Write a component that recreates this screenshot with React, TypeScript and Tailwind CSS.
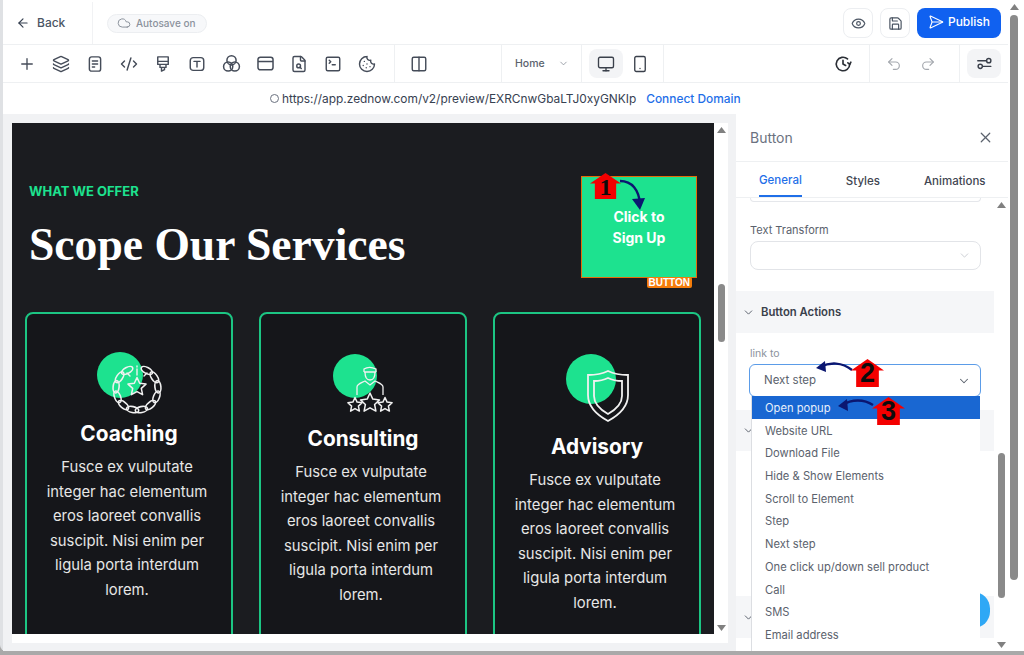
import * as React from "react";
import {
  ArrowLeft,
  ChevronDown,
  Cloud,
  CodeXml,
  Columns2,
  Cookie,
  Eye,
  FileSearch,
  Layers,
  Monitor,
  Plus,
  Redo2,
  Save,
  SendHorizontal,
  Smartphone,
  SquareTerminal,
  Undo2,
  X,
} from "lucide-react";

const bodyLines = ["Fusce ex vulputate", "integer hac elementum", "eros laoreet convallis", "suscipit. Nisi enim per", "ligula porta interdum", "lorem."];

const linkOptions = [
  "Website URL",
  "Download File",
  "Hide & Show Elements",
  "Scroll to Element",
  "Step",
  "Next step",
  "One click up/down sell product",
  "Call",
  "SMS",
  "Email address",
  "Membership",
];

function StarShape({ cx, cy, r }: { cx: number; cy: number; r: number }) {
  const points = Array.from({ length: 10 }, (_, i) => {
    const a = -Math.PI / 2 + (i * Math.PI) / 5;
    const d = i % 2 === 0 ? r : r * 0.48;
    return `${(cx + d * Math.cos(a)).toFixed(1)},${(cy + d * Math.sin(a)).toFixed(1)}`;
  }).join(" ");
  return <polygon points={points} fill="none" stroke="#f1f1f1" strokeWidth="1.5" strokeLinejoin="round" />;
}

function LaurelIcon() {
  const angles = [-62, -34, -6, 22, 50, 78, 102, 130, 158, 186, 214, 242];
  return (
    <svg width="80" height="70" viewBox="0 0 80 70">
      <circle cx="31" cy="30" r="23" fill="#1de28f" />
      {angles.map((a) => {
        const x = 48 + 21 * Math.cos((a * Math.PI) / 180);
        const y = 44 + 21 * Math.sin((a * Math.PI) / 180);
        return (
          <ellipse key={a} cx={x} cy={y} rx="3" ry="6.2" transform={`rotate(${a} ${x} ${y})`} fill="none" stroke="#f1f1f1" strokeWidth="1.6" />
        );
      })}
      <StarShape cx={48} cy={42} r={9.5} />
      <path d="M48 21v1M48 24v6M38 28l3 3M58 28l-3 3" stroke="#f1f1f1" strokeWidth="1.4" strokeLinecap="round" />
    </svg>
  );
}

function ConsultantIcon() {
  return (
    <svg width="80" height="70" viewBox="0 0 80 70">
      <circle cx="32" cy="31" r="22" fill="#1de28f" />
      <path d="M41 27v-3c3-2 8-2 12 0v3M41 27h12M42 27c0 6 2 8 5 8s5-2 5-8" fill="none" stroke="#f1f1f1" strokeWidth="1.3" />
      <path d="M34 50v-8c0-3 4-4 8-6l5 4 5-4c4 2 8 3 8 6v8" fill="none" stroke="#f1f1f1" strokeWidth="1.3" />
      <StarShape cx={32} cy={60} r={7.5} />
      <StarShape cx={47} cy={58} r={10} />
      <StarShape cx={62} cy={60} r={7.5} />
    </svg>
  );
}

function ShieldIcon() {
  return (
    <svg width="80" height="80" viewBox="0 0 80 80">
      <circle cx="34" cy="34" r="25" fill="#1de28f" />
      <path d="M51 26c6 3 13 4 20 4v20c0 11-9 20-20 26-11-6-20-15-20-26V30c7 0 14-1 20-4z" fill="none" stroke="#f1f1f1" strokeWidth="1.8" />
      <path d="M51 33c4 2 9 3 14 3v15c0 8-7 14-14 18-7-4-14-10-14-18V36c5 0 10-1 14-3z" fill="none" stroke="#f1f1f1" strokeWidth="1.8" />
    </svg>
  );
}

const ico = { size: 18, strokeWidth: 1.9, color: "#454c59" };

function TypeBox() {
  return (
    <svg width="18" height="18" viewBox="0 0 24 24" fill="none" stroke="#454c59" strokeWidth="1.9" strokeLinecap="round">
      <rect x="3" y="3.5" width="18" height="17" rx="4" />
      <path d="M8 8.5h8M12 8.5v7.5" />
    </svg>
  );
}

function FormIcon() {
  return (
    <svg width="18" height="18" viewBox="0 0 24 24" fill="none" stroke="#454c59" strokeWidth="1.9" strokeLinecap="round">
      <rect x="4.5" y="2.5" width="15" height="19" rx="3" />
      <path d="M8.5 8h7M8.5 12h7M8.5 16h3" />
    </svg>
  );
}

function BrushIcon() {
  return (
    <svg width="18" height="18" viewBox="0 0 24 24" fill="none" stroke="#454c59" strokeWidth="1.9" strokeLinejoin="round">
      <path d="M5 2.5h14v10H5zM5 8.5h14M8 12.5v4h8v-4M10 16.5v5l4-2v-3" />
    </svg>
  );
}

function BlendIcon() {
  return (
    <svg width="19" height="19" viewBox="0 0 24 24" fill="none" stroke="#454c59" strokeWidth="1.9">
      <circle cx="12" cy="8" r="5.8" />
      <circle cx="7.8" cy="15.8" r="5.8" />
      <circle cx="16.2" cy="15.8" r="5.8" />
    </svg>
  );
}

function PanelIcon() {
  return (
    <svg width="19" height="19" viewBox="0 0 24 24" fill="none" stroke="#454c59" strokeWidth="1.9">
      <rect x="2.5" y="4" width="19" height="16" rx="3" />
      <path d="M2.5 9.5h19" />
    </svg>
  );
}

function ClockArrow() {
  return (
    <svg width="18" height="18" viewBox="0 0 24 24" fill="none" stroke="#2b2f36" strokeWidth="2.2" strokeLinecap="round" strokeLinejoin="round">
      <path d="M21 12a9 9 0 1 1-3-6.7" />
      <path d="M12 7v5l3.5 2" />
      <path d="M22.5 9.5 21 12.5l-2.5-2" />
    </svg>
  );
}

function TuneIcon() {
  return (
    <svg width="17" height="17" viewBox="0 0 24 24" fill="none" stroke="#3a404b" strokeWidth="2" strokeLinecap="round">
      <path d="M2.5 8h12M21 16H9.5" />
      <circle cx="18" cy="8" r="3" />
      <circle cx="6" cy="16" r="3" />
    </svg>
  );
}

function Triangle({ down }: { down?: boolean }) {
  return (
    <svg width="9" height="6" viewBox="0 0 9 6" className="shrink-0">
      <polygon points={down ? "0,0 9,0 4.5,6" : "0,6 9,6 4.5,0"} fill="#808080" />
    </svg>
  );
}

function House({ className, digit, serif }: { className: string; digit: string; serif?: boolean }) {
  return (
    <div className={`absolute flex items-end justify-center ${className}`}>
      <svg viewBox="0 0 32 27" className="absolute inset-0 h-full w-full" preserveAspectRatio="none">
        <polygon points="0,11 16,0 32,11 27,11 27,27 5,27 5,11" fill="#f40000" />
      </svg>
      <span
        className={`relative leading-none font-bold text-[#0c0c0c] ${
          serif ? "font-['Liberation_Serif',serif] text-[24px]" : "font-['Liberation_Sans',sans-serif] text-[27px]"
        }`}
      >
        {digit}
      </span>
    </div>
  );
}

function CurveArrow({ className, d, head, w, h }: { className: string; d: string; head: string; w: number; h: number }) {
  return (
    <svg width={w} height={h} viewBox={`0 0 ${w} ${h}`} className={`absolute ${className}`}>
      <path d={d} fill="none" stroke="#0b1670" strokeWidth="2.4" />
      <polygon points={head} fill="#0b1670" />
    </svg>
  );
}

function ServiceCard({
  icon,
  titleClass,
  title,
  topClass,
}: {
  icon: React.ReactNode;
  titleClass: string;
  title: string;
  topClass: string;
}) {
  return (
    <div className="flex h-[340px] w-[208px] shrink-0 flex-col items-center rounded-lg border-2 border-[#1cc583] bg-[#15161a]">
      <div className={topClass}>{icon}</div>
      <h3 className={`h-[28px] text-[20.8px] leading-[28px] font-bold whitespace-nowrap text-white ${titleClass}`}>{title}</h3>
      <div className="mt-[7px] mr-[4px] text-center text-[14.8px] leading-[24.5px] whitespace-nowrap text-[#e6e6e6]">
        {bodyLines.map((line) => (
          <div key={line}>{line}</div>
        ))}
      </div>
    </div>
  );
}

export default function App() {
  return (
    <div className="relative flex h-[655px] w-[1024px] items-start overflow-hidden bg-[#a9a9a9] font-['Inter',sans-serif]">
      <div className="flex h-[651px] w-[1008px] shrink-0 flex-col rounded-bl-md border-l-[3px] border-[#dfe1e4] bg-white">
        {/* top bar */}
        <div className="flex h-[45px] shrink-0 items-center border-b border-[#eef0f2] pt-[2px]">
          <div className="flex h-full w-[90px] items-center gap-[7px] border-r border-[#f1f2f4] pl-[13px] text-[12px] font-medium text-[#4b5563]">
            <ArrowLeft size={14} strokeWidth={2} color="#374151" />
            Back
          </div>
          <div className="ml-[14px] flex h-[19px] w-[100px] items-center gap-[5px] rounded-full border border-[#eceef1] bg-[#f7f8fa] pl-[9px] text-[10px] font-medium text-[#8b929c]">
            <Cloud size={14} strokeWidth={1.7} color="#8b929c" />
            Autosave on
          </div>
          <div className="ml-auto flex items-center gap-[7px] pr-[7px]">
            <div className="flex h-[30px] w-[30px] items-center justify-center rounded-lg border border-[#eceef1]">
              <Eye size={15} strokeWidth={1.9} color="#4b5563" />
            </div>
            <div className="flex h-[30px] w-[30px] items-center justify-center rounded-lg border border-[#eceef1]">
              <Save size={15} strokeWidth={1.9} color="#4b5563" />
            </div>
            <div className="flex h-[30px] w-[84px] items-center justify-center gap-[4px] rounded-lg bg-[#1061f0] pb-[2px] text-[12px] font-medium text-white">
              <SendHorizontal size={16} strokeWidth={1.6} />
              Publish
            </div>
          </div>
        </div>

        {/* toolbar */}
        <div className="flex h-[38px] shrink-0 items-center border-b border-[#eef0f2] pl-[7px]">
          <div className="flex h-full w-[385px] items-center border-r border-[#eef0f2]">
            {[
              <Plus key="plus" size={18} strokeWidth={1.8} color="#454c59" />,
              <Layers key="layers" {...ico} />,
              <FormIcon key="form" />,
              <CodeXml key="code" {...ico} />,
              <BrushIcon key="brush" />,
              <TypeBox key="type" />,
              <BlendIcon key="blend" />,
              <PanelIcon key="panel" />,
              <FileSearch key="search" {...ico} />,
              <SquareTerminal key="terminal" {...ico} />,
              <Cookie key="cookie" {...ico} />,
            ].map((icon, i) => (
              <div key={i} className="flex h-full w-[34px] shrink-0 items-center justify-center">
                {icon}
              </div>
            ))}
          </div>
          <div className="flex h-full w-[107px] items-center border-r border-[#eef0f2] pl-[7px]">
            <div className="flex w-[34px] justify-center">
              <Columns2 {...ico} />
            </div>
          </div>
          <div className="flex h-full w-[80px] items-center border-r border-[#eef0f2] pl-[13px] text-[10.5px] font-medium text-[#5b626d]">
            Home
            <ChevronDown size={11} strokeWidth={1.8} color="#8a909a" className="ml-[13px]" />
          </div>
          <div className="flex h-full w-[82px] items-center border-r border-[#eef0f2] pl-[7px]">
            <div className="flex h-[29px] w-[34px] items-center justify-center rounded-lg bg-[#f3f4f6]">
              <Monitor size={18} strokeWidth={1.8} color="#3a404b" />
            </div>
            <div className="flex w-[34px] items-center justify-center">
              <Smartphone size={18} strokeWidth={1.8} color="#3a404b" />
            </div>
          </div>
          <div className="flex h-full w-[206px] items-center justify-end border-r border-[#eef0f2] pr-[17px]">
            <ClockArrow />
          </div>
          <div className="flex h-full w-[90px] items-center gap-[18px] border-r border-[#eef0f2] pl-[16px]">
            <Undo2 size={16} strokeWidth={1.7} color="#a4a8ae" />
            <Redo2 size={16} strokeWidth={1.7} color="#a4a8ae" />
          </div>
          <div className="ml-[7px] flex h-[29px] w-[34px] items-center justify-center rounded-lg bg-[#f3f4f6]">
            <TuneIcon />
          </div>
        </div>

        {/* preview url */}
        <div className="flex h-[31px] shrink-0 items-center pl-[267px] text-[11.9px] whitespace-nowrap text-[#374151]">
          <span className="mr-[3px] h-[9px] w-[9px] rounded-full border border-[#6b7280]" />
          <span>https://app.zednow.com/v2/preview/EXRCnwGbaLTJ0xyGNKIp</span>
          <span className="ml-[10px] font-medium text-[#1f6fe8]">Connect Domain</span>
        </div>

        <div className="flex min-h-0 flex-1">
          {/* canvas */}
          <div className="h-full w-[733px] shrink-0 bg-[#f1f2f4] pt-[9px] pl-[9px]">
            <div className="flex h-[520px] w-[716px] items-start bg-white">
              <div className="h-[511px] w-[702px] shrink-0 overflow-hidden bg-[#1b1c20]">
                <div className="flex items-start justify-between pt-[53px] pr-[17px] pl-[17px]">
                  <div>
                    <div className="mt-[3px] text-[13px] leading-[24px] font-bold text-[#1de28f]">WHAT WE OFFER</div>
                    <h1 className="mt-[15px] font-['Liberation_Serif',serif] text-[45.6px] leading-[54px] font-bold whitespace-nowrap text-white">
                      Scope Our Services
                    </h1>
                  </div>
                  <div className="relative flex h-[102px] w-[116px] items-center justify-center border border-[#e36c0a] bg-[#1de28f] text-center text-[14px] leading-[21px] font-bold text-white">
                    <div>
                      Click to
                      <br />
                      Sign Up
                    </div>
                    <span className="absolute top-[100px] right-[4px] rounded-[2px] bg-[#f57c0a] px-[2px] font-['Liberation_Sans',sans-serif] text-[10px] leading-[11px] text-white">
                      BUTTON
                    </span>
                  </div>
                </div>
                <div className="mt-[34px] flex gap-[26px] pl-[13px]">
                  <ServiceCard icon={<LaurelIcon />} title="Coaching" titleClass="mt-[5px]" topClass="mt-[31px] h-[70px] w-[80px]" />
                  <ServiceCard icon={<ConsultantIcon />} title="Consulting" titleClass="mt-[10px]" topClass="mt-[31px] h-[70px] w-[80px]" />
                  <ServiceCard icon={<ShieldIcon />} title="Advisory" titleClass="mt-[8px]" topClass="mt-[31px] h-[80px] w-[80px]" />
                </div>
              </div>
              <div className="flex h-[511px] w-[14px] flex-col items-center pt-[4px] pb-[3px]">
                <Triangle />
                <div className="mt-[151px] h-[58px] w-[7px] rounded-full bg-[#8a8a8a]" />
                <div className="mt-auto">
                  <Triangle down />
                </div>
              </div>
            </div>
          </div>

          {/* settings panel */}
          <div className="relative flex h-full w-[272px] shrink-0 overflow-hidden">
            <div className="flex w-[258px] shrink-0 flex-col">
              <div className="flex h-[48px] w-[272px] shrink-0 items-center justify-between border-b border-[#eef0f2] pr-[14px] pl-[14px] text-[14px] text-[#6b7280]">
                Button
                <X size={17} strokeWidth={1.7} color="#5b626d" />
              </div>
              <div className="flex h-[36px] w-[272px] shrink-0 items-stretch gap-[44px] border-b border-[#eef0f2] pl-[23px] text-[11.5px] font-medium text-[#3f4652]">
                <div className="flex items-center border-b-2 border-[#1f6fe8] pt-[4px] text-[#1f6fe8]">General</div>
                <div className="flex items-center pt-[4px]">Styles</div>
                <div className="flex items-center pt-[4px]">Animations</div>
              </div>
              <div className="mr-[13px] ml-[14px] h-[4px] shrink-0 rounded-b-lg border border-t-0 border-[#e5e7eb]" />
              <label className="mt-[21px] ml-[14px] h-[14px] text-[11px] leading-[14px] text-[#5b626d]">Text Transform</label>
              <div className="mt-[4px] mr-[13px] ml-[14px] flex h-[29px] shrink-0 items-center justify-end rounded-lg border border-[#e2e4e8] pr-[9px]">
                <ChevronDown size={13} strokeWidth={1.5} color="#c0c4ca" />
              </div>
              <div className="mt-[21px] flex h-[42px] shrink-0 items-center gap-[6px] bg-[#f5f6f8] pt-[1px] pl-[6px] text-[11.3px] font-semibold text-[#3a404b]">
                <ChevronDown size={13} strokeWidth={1.8} color="#5b626d" />
                Button Actions
              </div>
              <label className="mt-[14px] ml-[14px] h-[14px] text-[10.5px] leading-[14px] text-[#8b929c]">link to</label>
              <div className="mx-[13px] mt-[3px] flex h-[33px] shrink-0 items-center justify-between rounded-md border-[1.5px] border-[#5b9ce8] pr-[9px] pl-[14px] text-[11.5px] text-[#5b626d]">
                Next step
                <ChevronDown size={14} strokeWidth={1.8} color="#5b626d" />
              </div>
              <div className="mt-[13px] flex h-[41px] shrink-0 items-center bg-[#f5f6f8] pl-[6px]">
                <ChevronDown size={13} strokeWidth={1.8} color="#5b626d" />
              </div>
              <div className="mt-[145px] flex h-[42px] shrink-0 items-center bg-[#f5f6f8] pl-[6px]">
                <ChevronDown size={13} strokeWidth={1.8} color="#5b626d" />
              </div>
            </div>
            <div className="flex h-full w-[14px] flex-col items-center pt-[88px] pb-[3px]">
              <Triangle />
              <div className="mt-[245px] h-[145px] w-[7px] rounded-full bg-[#8a8a8a]" />
              <div className="mt-auto">
                <Triangle down />
              </div>
            </div>

            {/* chat bubble behind the open list */}
            <span className="absolute top-[478px] left-[221px] h-[36px] w-[33px] rounded-full bg-[#2fa8f5]" />

            {/* open select list */}
            <div className="absolute top-[282px] left-[15px] w-[229px] border-l border-[#dcdee2] bg-white text-[11.2px] leading-[25px] text-[#5b626d]">
              <div className="h-[22.7px] bg-[#1967d2] pl-[13px] text-[#e6effb]">Open popup</div>
              {linkOptions.map((opt) => (
                <div key={opt} className="h-[22.7px] pl-[13px]">
                  {opt}
                </div>
              ))}
            </div>
          </div>
        </div>
      </div>

      {/* browser scrollbar */}
      <div className="flex h-[651px] w-[16px] shrink-0 flex-col bg-white pt-[4px] pl-[2px]">
        <div className="flex w-[8px] justify-center">
          <Triangle />
        </div>
        <div className="mt-[5px] h-[565px] w-[8px] rounded-full bg-[#8a8a8a]" />
      </div>

      {/* tutorial annotations */}
      <CurveArrow className="top-[178px] left-[618px]" w={28} h={36} d="M2 3 C14 3 21 12 22 26" head="14,21 27,20 22,32" />
      <House className="top-[173px] left-[590px] h-[26px] w-[31px]" digit="1" serif />
      <CurveArrow className="top-[358px] left-[814px]" w={40} h={18} d="M38 12 C28 4 16 4 6 9" head="2,10 11,3 12,14" />
      <House className="top-[359px] left-[851px] h-[28px] w-[33px]" digit="2" />
      <CurveArrow className="top-[396px] left-[836px]" w={38} h={18} d="M37 9 C28 3 16 3 6 9" head="2,10 11,3 12,15" />
      <House className="top-[397px] left-[872px] h-[28px] w-[33px]" digit="3" />
    </div>
  );
}
